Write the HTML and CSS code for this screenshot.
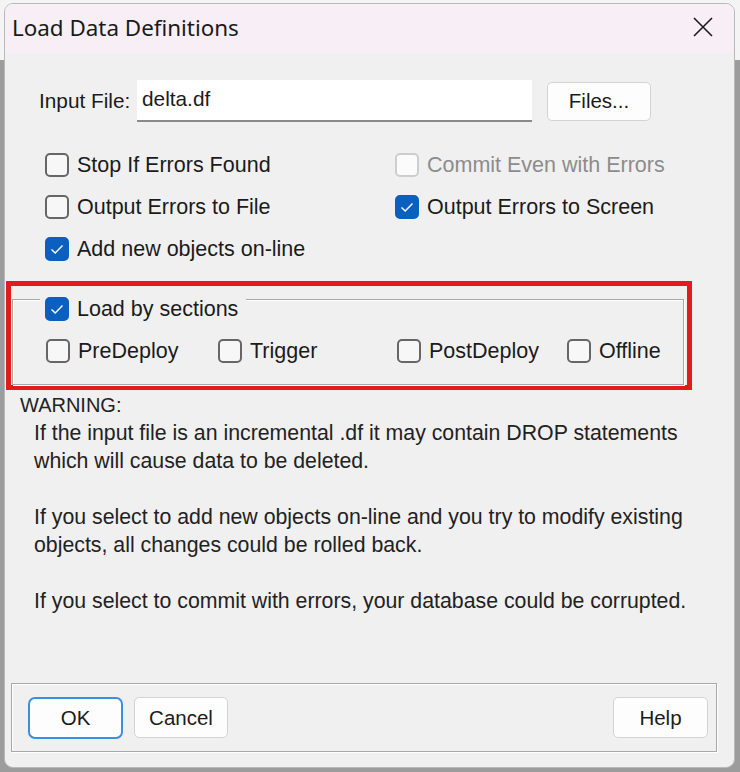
FILE: index.html
```html
<!DOCTYPE html>
<html>
<head>
<meta charset="utf-8">
<link rel="stylesheet" href="styles.css">
</head>
<body>
<div class="window">
  <div class="titlebar">
    <span class="title">Load Data Definitions</span>
    <svg class="close" width="22" height="22" viewBox="0 0 22 22"><path d="M2 2 L20 20 M20 2 L2 20" stroke="#1a1a1a" stroke-width="1.6" fill="none"/></svg>
  </div>
  <div class="content">
    <div class="input-row">
      <span class="label">Input File:</span>
      <div class="input">delta.df</div>
      <div class="btn files">Files...</div>
    </div>
    <div class="options">
      <div class="opt"><span class="cb"></span><span>Stop If Errors Found</span></div>
      <div class="opt disabled"><span class="cb"></span><span>Commit Even with Errors</span></div>
      <div class="opt"><span class="cb"></span><span>Output Errors to File</span></div>
      <div class="opt"><span class="cb checked"><svg viewBox="0 0 24 24"><path d="M6.5 12.5 L10.2 16 L17.5 8.5" stroke="#fff" stroke-width="1.4" fill="none"/></svg></span><span>Output Errors to Screen</span></div>
      <div class="opt"><span class="cb checked"><svg viewBox="0 0 24 24"><path d="M6.5 12.5 L10.2 16 L17.5 8.5" stroke="#fff" stroke-width="1.4" fill="none"/></svg></span><span>Add new objects on-line</span></div>
    </div>
    <div class="highlight">
      <div class="group">
        <div class="legend"><span class="cb checked"><svg viewBox="0 0 24 24"><path d="M6.5 12.5 L10.2 16 L17.5 8.5" stroke="#fff" stroke-width="1.4" fill="none"/></svg></span><span>Load by sections</span></div>
        <div class="sections">
          <div class="opt sec1"><span class="cb"></span><span>PreDeploy</span></div>
          <div class="opt sec2"><span class="cb"></span><span>Trigger</span></div>
          <div class="opt sec3"><span class="cb"></span><span>PostDeploy</span></div>
          <div class="opt sec4"><span class="cb"></span><span>Offline</span></div>
        </div>
      </div>
    </div>
    <div class="warning">WARNING:</div>
    <div class="warn-text">If the input file is an incremental .df it may contain DROP statements<br>which will cause data to be deleted.<br><br>If you select to add new objects on-line and you try to modify existing<br>objects, all changes could be rolled back.<br><br>If you select to commit with errors, your database could be corrupted.</div>
    <div class="footer">
      <div class="btn ok">OK</div>
      <div class="btn cancel">Cancel</div>
      <div class="spacer"></div>
      <div class="btn help">Help</div>
    </div>
  </div>
</div>
</body>
</html>
```

FILE: styles.css
```css
html, body {
  margin: 0;
  padding: 0;
}
body {
  width: 740px;
  height: 772px;
  background: linear-gradient(#f4f4f4 0, #f4f4f4 60px, #9c9c9c 60px, #9c9c9c 100%);
  font-family: "Liberation Sans", Arial, sans-serif;
  color: #1b1b1b;
  overflow: hidden;
}
.window {
  box-sizing: border-box;
  margin: 3px 0 0 4px;
  width: 731px;
  height: 765px;
  border: 1px solid #b9b9b9;
  border-radius: 9px;
  background: #f0f0f0;
  overflow: hidden;
  display: flex;
  flex-direction: column;
}
.titlebar {
  height: 49px;
  flex: none;
  background: #f8eef6;
  display: flex;
  align-items: center;
  justify-content: space-between;
  padding: 0 20px 0 7px;
}
.title {
  font-family: "Noto Sans", "Open Sans", sans-serif;
  font-size: 22.4px;
  color: #1a1a1a;
  margin-top: -3px;
}
.close {
  margin-top: -3px;
}
.content {
  flex: 1;
  display: flex;
  flex-direction: column;
  padding: 27px 0 15px 0;
}
.input-row {
  display: flex;
  align-items: center;
  padding-left: 34px;
  height: 42px;
}
.label {
  font-size: 20.8px;
  width: 98px;
}
.input {
  box-sizing: border-box;
  width: 395px;
  height: 42px;
  background: #fff;
  border-bottom: 2px solid #8a8a8a;
  font-size: 20.8px;
  padding: 7px 0 0 5px;
}
.btn {
  box-sizing: border-box;
  display: flex;
  align-items: center;
  justify-content: center;
  background: #fdfdfd;
  border: 1px solid #d3d3d3;
  border-radius: 5px;
  font-size: 20.5px;
  height: 40px;
}
.files {
  width: 104px;
  margin-left: 15px;
  height: 39px;
}
.options {
  display: grid;
  grid-template-columns: 350px 300px;
  grid-auto-rows: 42px;
  padding-left: 40px;
  margin-top: 22px;
}
.opt {
  display: flex;
  align-items: center;
  font-size: 21.5px;
  white-space: nowrap;
}
.opt.disabled {
  color: #8c8c8c;
}
.cb {
  box-sizing: border-box;
  flex: none;
  width: 24px;
  height: 24px;
  border: 2px solid #666;
  border-radius: 5px;
  background: #f7f7f7;
  margin-right: 8px;
  display: inline-flex;
}
.cb svg {
  width: 24px;
  height: 24px;
  margin: -2px;
}
.disabled .cb {
  border-color: #cdcdcd;
  background: #fbfbfb;
}
.cb.checked {
  background: #0b5fbf;
  border-color: #0b5fbf;
}
.highlight {
  box-sizing: border-box;
  margin: 11px 0 0 1px;
  width: 686px;
  border: 5px solid #e21c1c;
  padding: 13px 0 0 1px;
}
.group {
  box-sizing: border-box;
  width: 672px;
  border: 1px solid #a8a8a8;
  box-shadow: inset 1px 1px 0 #fff, 1px 1px 0 #fff;
  padding: 0 0 21px 0;
}
.legend {
  display: flex;
  width: fit-content;
  align-items: center;
  font-size: 21.5px;
  margin: -3px 0 0 27px;
  padding: 0 8px 0 5px;
  background: #f0f0f0;
  height: 24px;
}
.sections {
  display: flex;
  margin-top: 18px;
  padding-left: 33px;
  height: 24px;
}
.sec1 { width: 172px; }
.sec2 { width: 179px; }
.sec3 { width: 170px; }
.warning {
  font-size: 20px;
  line-height: 28px;
  margin: 1px 0 0 15px;
  color: #222;
}
.warn-text {
  font-size: 21.3px;
  line-height: 28px;
  padding-left: 29px;
  color: #222;
  white-space: nowrap;
}
.footer {
  margin: auto 0 0 6px;
  box-sizing: border-box;
  width: 706px;
  height: 69px;
  border: 1px solid #a8a8a8;
  box-shadow: inset 1px 1px 0 #fff, 1px 1px 0 #fff;
  display: flex;
  align-items: center;
  padding: 0 8px 0 16px;
}
.ok {
  width: 95px;
  height: 42px;
  border: 2px solid #3b8ee0;
  border-radius: 7px;
}
.cancel {
  width: 94px;
  height: 41px;
  margin-left: 11px;
}
.spacer { flex: 1; }
.help {
  width: 95px;
  height: 41px;
}
```
